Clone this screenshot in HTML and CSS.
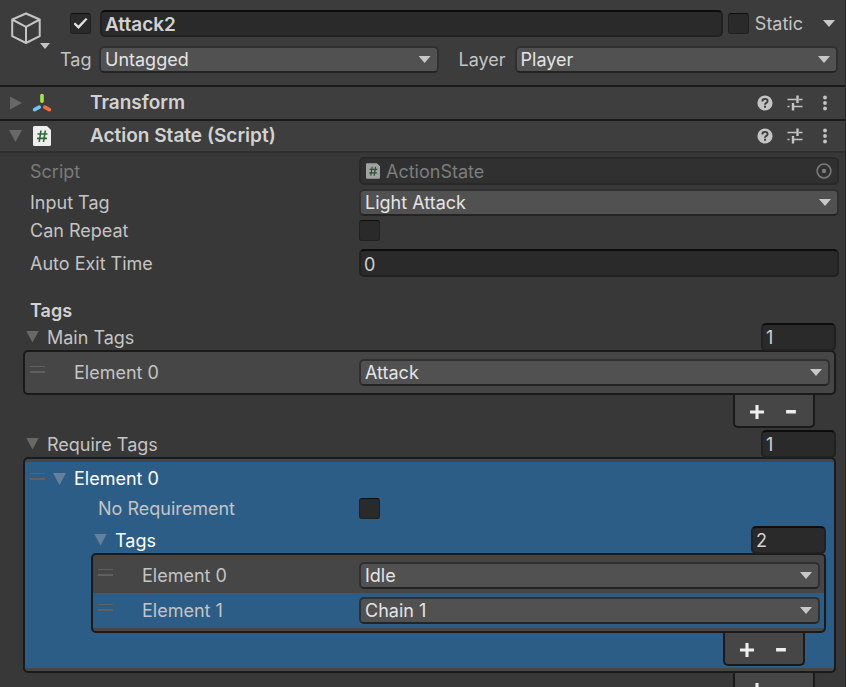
FILE: index.html
```html
<!DOCTYPE html>
<html lang="en">
<head>
<meta charset="utf-8">
<title>Inspector</title>
<link rel="stylesheet" href="styles.css">
</head>
<body>
<svg class="defs" aria-hidden="true">
  <symbol id="help" viewBox="0 0 16 16"><circle cx="8" cy="8" r="7.6" fill="#c4c4c4"/><path d="M5.4 6.4C5.4 4.8 6.5 3.9 8 3.9s2.6.9 2.6 2.3C10.600 7.900 8 7.900 8 9.700" fill="none" stroke="#3e3e3e" stroke-width="1.900"/><rect x="7" y="10.700" width="2" height="2" fill="#3e3e3e"/></symbol>
  <symbol id="preset" viewBox="0 0 16 16"><path d="M.5 4.500h9M12 4.500h3.500M.5 11.500h2M6 11.500h9.500" stroke="#c4c4c4" stroke-width="1.400"/><path d="M10.500 .5v7.500M6 8v7.500" stroke="#c4c4c4" stroke-width="2.400"/></symbol>
  <symbol id="more" viewBox="0 0 16 16"><circle cx="8" cy="2.500" r="1.900" fill="#c4c4c4"/><circle cx="8" cy="8" r="1.900" fill="#c4c4c4"/><circle cx="8" cy="13.500" r="1.900" fill="#c4c4c4"/></symbol>
  <symbol id="script" viewBox="0 0 18 20"><path d="M1.500 0H14l4 4v14.500a1.500 1.500 0 0 1-1.500 1.500h-15A1.500 1.500 0 0 1 0 18.500v-17A1.500 1.500 0 0 1 1.500 0z" fill="#eee"/><path d="M8 4.500 6.200 16M12.300 4.500 10.500 16M4.500 8h10M4 12.400h10" stroke="#2b6a33" stroke-width="1.600" fill="none"/></symbol>
</svg>
<main class="panel">
  <header class="object">
    <button class="cube" aria-label="Object icon">
      <svg width="40" height="40" viewBox="0 0 40 40"><path d="M16 3.500 29.700 9.500v16.700L16 33 2.200 26.200V9.500zM2.200 9.500 16 16.800 29.700 9.500M16 16.800V33" fill="none" stroke="#c4c4c4" stroke-width="2" stroke-linejoin="round"/><path d="M30 33h10l-5 6z" fill="#c4c4c4"/></svg>
    </button>
    <div class="object-fields">
      <div class="name-row">
        <input class="check" type="checkbox" checked aria-label="Active">
        <input class="text name" type="text" value="Attack2" aria-label="Name">
        <label class="static"><input class="check" type="checkbox">Static</label>
        <button class="static-menu" aria-label="Static options"></button>
      </div>
      <div class="tag-row">
        <label for="tag">Tag</label>
        <div class="drop"><select id="tag"><option>Untagged</option></select></div>
        <label class="layer" for="layer">Layer</label>
        <div class="drop"><select id="layer"><option>Player</option></select></div>
      </div>
    </div>
  </header>

  <section class="component">
    <button class="fold closed" aria-label="Expand Transform"></button>
    <svg class="type" viewBox="0 0 20 20"><g fill="none" stroke-width="3.600" stroke-linecap="round"><path d="M10 2.600v5.600" stroke="#a4e64a"/><path d="m7.200 14.200-4.600 2.500" stroke="#6cc8f5"/><path d="m12.800 14.200 4.600 2.500" stroke="#fa6a3c"/></g></svg>
    <h2>Transform</h2>
    <button aria-label="Help"><svg><use href="#help"/></svg></button>
    <button aria-label="Presets"><svg><use href="#preset"/></svg></button>
    <button aria-label="More"><svg><use href="#more"/></svg></button>
  </section>
  <section class="component open">
    <button class="fold" aria-label="Collapse Action State"></button>
    <svg class="type"><use href="#script"/></svg>
    <h2>Action State (Script)</h2>
    <button aria-label="Help"><svg><use href="#help"/></svg></button>
    <button aria-label="Presets"><svg><use href="#preset"/></svg></button>
    <button aria-label="More"><svg><use href="#more"/></svg></button>
  </section>

  <section class="fields">
    <div class="row disabled">
      <label for="script-ref">Script</label>
      <div class="ref">
        <svg class="ref-icon"><use href="#script"/></svg>
        <input id="script-ref" type="text" value="ActionState" disabled>
        <svg class="pick" viewBox="0 0 16 16"><circle cx="8" cy="8" r="6.900" fill="none" stroke="#7d7d7d" stroke-width="1.500"/><circle cx="8" cy="8" r="2.200" fill="#7d7d7d"/></svg>
      </div>
    </div>
    <div class="row"><label for="input-tag">Input Tag</label><div class="drop"><select id="input-tag"><option>Light Attack</option></select></div></div>
    <div class="row toggle"><label for="repeat">Can Repeat</label><input class="check" id="repeat" type="checkbox"></div>
    <div class="row exit"><label for="exit">Auto Exit Time</label><input class="text" id="exit" type="text" value="0"></div>
  </section>

  <section class="lists">
    <h3>Tags</h3>
    <div class="list-head">
      <button class="fold" aria-label="Collapse Main Tags"></button>
      <label for="main-size">Main Tags</label>
      <input class="text size" id="main-size" type="text" value="1">
    </div>
    <div class="list">
      <div class="item"><span class="grip"></span><label for="main-0">Element 0</label><div class="drop"><select id="main-0"><option>Attack</option></select></div></div>
    </div>
    <div class="foot"><button class="add" aria-label="Add main tag"></button><button class="remove" aria-label="Remove main tag"></button></div>

    <div class="list-head require">
      <button class="fold" aria-label="Collapse Require Tags"></button>
      <label for="req-size">Require Tags</label>
      <input class="text size" id="req-size" type="text" value="1">
    </div>
    <div class="list">
      <div class="group selected">
        <div class="group-head"><span class="grip"></span><button class="fold" aria-label="Collapse Element 0"></button><span>Element 0</span></div>
        <div class="group-row"><label for="no-req">No Requirement</label><input class="check" id="no-req" type="checkbox"></div>
        <div class="nested">
          <div class="list-head">
            <button class="fold" aria-label="Collapse Tags"></button>
            <label for="tags-size">Tags</label>
            <input class="text size" id="tags-size" type="text" value="2">
          </div>
          <div class="list">
            <div class="item"><span class="grip"></span><label for="t0">Element 0</label><div class="drop"><select id="t0"><option>Idle</option></select></div></div>
            <div class="item selected"><span class="grip"></span><label for="t1">Element 1</label><div class="drop"><select id="t1"><option>Chain 1</option></select></div></div>
          </div>
          <div class="foot"><button class="add" aria-label="Add tag"></button><button class="remove" aria-label="Remove tag"></button></div>
        </div>
      </div>
    </div>
    <div class="foot"><button class="add" aria-label="Add required tag"></button><button class="remove" aria-label="Remove required tag"></button></div>
  </section>
</main>
</body>
</html>
```
FILE: styles.css
```css
* { box-sizing: border-box; }

body {
  margin: 0;
  background: #383838;
  color: #c4c4c4;
  font: 18px/24px Inter, "Liberation Sans", sans-serif;
}

button {
  flex: none;
  margin: 0;
  padding: 0;
  border: 0;
  background: none;
  color: inherit;
}

h2, h3 {
  margin: 0;
  font-size: 18px;
  font-weight: 600;
  color: #d2d2d2;
}

svg { display: block; }

.defs {
  position: absolute;
  width: 0;
  height: 0;
}

.panel {
  height: 100vh;
  overflow: auto;
  scrollbar-width: none;
  border-right: 1px solid #282828;
}

/* Controls */

.text, .ref, select {
  display: block;
  width: 100%;
  min-width: 0;
  height: 28px;
  margin: 0;
  padding: 0 3px;
  border: 2px solid #212121;
  border-top-color: #0d0d0d;
  border-radius: 5px;
  background: #2a2a2a;
  color: #d2d2d2;
  font: inherit;
}

.text { padding-top: 2px; }

select {
  appearance: none;
  height: 27px;
  padding: 0 4px;
  border-color: #303030;
  border-bottom-color: #242424;
  background: #515151;
  color: #e4e4e4;
}

.drop {
  flex: 1;
  min-width: 0;
  position: relative;
}

.drop::after, .static-menu::before {
  content: "";
  display: block;
  width: 12px;
  height: 7px;
  background: #c8c8c8;
  clip-path: polygon(0 0, 100% 0, 50% 100%);
}

.drop::after {
  position: absolute;
  right: 8px;
  top: 10px;
  pointer-events: none;
}

.check {
  appearance: none;
  flex: none;
  display: grid;
  place-items: center;
  width: 21px;
  height: 21px;
  margin: 0;
  border: 1px solid #212121;
  border-top-color: #0d0d0d;
  border-radius: 3px;
  background: #2a2a2a;
}

.check:checked::before {
  content: "";
  width: 14px;
  height: 11px;
  background: #e4e4e4;
  clip-path: polygon(0 55%, 12% 42%, 35% 68%, 88% 0, 100% 12%, 36% 100%);
}

.fold::before {
  content: "";
  display: block;
  width: 13px;
  height: 12px;
  background: #686868;
  clip-path: polygon(0 0, 100% 0, 50% 100%);
}

.fold.closed::before {
  width: 12px;
  height: 13px;
  margin-left: 1px;
  clip-path: polygon(0 0, 100% 50%, 0 100%);
}

/* Object header */

.object {
  display: flex;
  padding: 10px 7px 12px 10px;
  background: #3c3c3c;
}

.cube {
  width: 50px;
  height: 40px;
}

.object-fields {
  flex: 1;
  min-width: 0;
}

.name-row {
  display: flex;
  align-items: center;
  height: 27px;
  padding-left: 10px;
}

.name {
  flex: 1;
  height: 27px;
  margin: 0 5px 0 9px;
  font-size: 19px;
  font-weight: 600;
}

.static {
  display: flex;
  align-items: center;
  gap: 6px;
}

.static-menu { margin: 0 3px 0 20px; }

.tag-row {
  display: grid;
  grid-template-columns: 39px 21fr 76px 20fr;
  align-items: center;
  margin-top: 9px;
}

.layer { padding-left: 20px; }

/* Component title bars */

.component {
  display: flex;
  align-items: center;
  height: 34px;
  padding: 0 12px 0 9px;
  border-top: 2px solid #1a1a1a;
  background: #3e3e3e;
}

.component.open { border-bottom: 2px solid #303030; }

.component .fold { width: 13px; }

.component .type {
  width: 20px;
  height: 20px;
  margin: 0 38px 0 10px;
}

.component h2 {
  flex: 1;
  font-size: 19px;
  white-space: nowrap;
}

.component button svg {
  width: 16px;
  height: 16px;
}

.component button + button { margin-left: 14px; }

/* Script fields */

.fields {
  display: grid;
  gap: 4px;
  padding: 4px 6px 0 30px;
}

.row {
  display: flex;
  align-items: center;
}

.row > label {
  flex: none;
  width: 329px;
  padding-top: 1px;
}

.toggle { height: 21px; }
.row .text { flex: 1; }
.exit { margin-top: 4px; }
.disabled { color: #7a7a7a; }

.ref {
  flex: 1;
  display: flex;
  align-items: center;
  gap: 6px;
  padding: 0 5px;
  border-color: #292929;
  background: #303030;
}

.ref-icon {
  width: 14px;
  height: 16px;
  opacity: 0.6;
}

.ref input {
  flex: 1;
  min-width: 0;
  padding: 2px 0 0;
  border: 0;
  background: none;
  color: #7d7d7d;
  font: inherit;
}

.pick {
  width: 16px;
  height: 16px;
}

/* Reorderable lists */

.lists { padding: 22px 9px 0 23px; }

.lists h3 { padding-left: 7px; }

.list-head {
  display: flex;
  align-items: center;
  height: 27px;
  padding-left: 3px;
}

.list-head label {
  flex: 1;
  padding: 2px 0 0 8px;
}

.list-head .size {
  flex: none;
  width: 75px;
}

.require { margin-top: 2px; }

.list {
  padding: 3px 0;
  border: 2px solid #1a1a1a;
  border-radius: 5px;
  background: #464646;
}

.item {
  display: flex;
  align-items: center;
  height: 35px;
  padding: 0 4px 0 5px;
}

.grip {
  flex: none;
  width: 15px;
  height: 7px;
  margin-bottom: 6px;
  border-top: 1px solid #606060;
  border-bottom: 2px solid #606060;
}

.item label {
  flex: none;
  width: 314px;
  padding: 1px 0 0 29px;
}

.selected { background: #2c5d87; }
.selected .fold::before { background: #64809a; }

.group { padding-bottom: 2px; }

.group-head {
  display: flex;
  align-items: center;
  height: 34px;
  padding-left: 5px;
  color: #fff;
}

.group-head .fold { margin: 0 8px; }

.group-row {
  display: flex;
  align-items: center;
  height: 24px;
  padding-left: 73px;
}

.group-row label {
  width: 261px;
  padding-top: 1px;
}

.nested { padding: 6px 8px 0 66px; }

.nested .list-head label { color: #fff; }
.nested .item label { width: 246px; }

.foot {
  display: flex;
  align-items: center;
  justify-content: center;
  gap: 14px;
  width: 82px;
  height: 33px;
  margin: 0 21px 0 auto;
  padding-top: 3px;
  border: 2px solid #1a1a1a;
  border-top: 0;
  border-radius: 0 0 5px 5px;
  background: #464646;
}

.foot button {
  display: grid;
  place-items: center;
  width: 20px;
  height: 20px;
}

.foot button::before {
  content: "";
  width: 14px;
  height: 14px;
  background: #eee;
}

.add::before { clip-path: polygon(39% 0, 61% 0, 61% 39%, 100% 39%, 100% 61%, 61% 61%, 61% 100%, 39% 100%, 39% 61%, 0 61%, 0 39%, 39% 39%); }
.remove::before { clip-path: polygon(15% 36%, 85% 36%, 85% 61%, 15% 61%); }
```
